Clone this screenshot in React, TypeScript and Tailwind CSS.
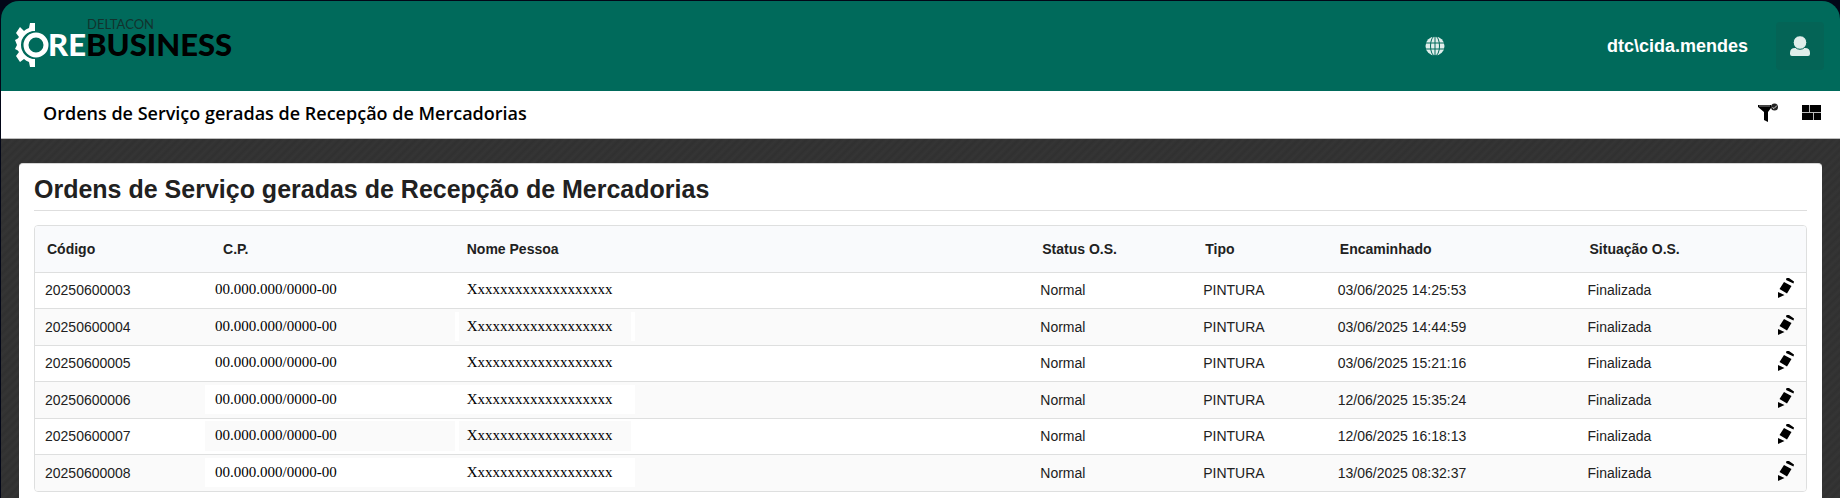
type Order = {
  code: string
  status: string
  kind: string
  sentAt: string
  situation: string
  // background of the masked part of the row
  mask: string
  personMask: string
}

const orders: Order[] = [
  { code: '20250600003', status: 'Normal', kind: 'PINTURA', sentAt: '03/06/2025 14:25:53', situation: 'Finalizada', mask: '', personMask: 'border-transparent' },
  { code: '20250600004', status: 'Normal', kind: 'PINTURA', sentAt: '03/06/2025 14:44:59', situation: 'Finalizada', mask: '', personMask: 'border-white' },
  { code: '20250600005', status: 'Normal', kind: 'PINTURA', sentAt: '03/06/2025 15:21:16', situation: 'Finalizada', mask: '', personMask: 'border-transparent' },
  { code: '20250600006', status: 'Normal', kind: 'PINTURA', sentAt: '12/06/2025 15:35:24', situation: 'Finalizada', mask: 'bg-white', personMask: 'border-white bg-white' },
  { code: '20250600007', status: 'Normal', kind: 'PINTURA', sentAt: '12/06/2025 16:18:13', situation: 'Finalizada', mask: 'bg-[#fafafa]', personMask: 'border-white bg-[#fafafa]' },
  { code: '20250600008', status: 'Normal', kind: 'PINTURA', sentAt: '13/06/2025 08:32:37', situation: 'Finalizada', mask: 'bg-white', personMask: 'border-white bg-white' },
]

const Logo = () => (
  <svg viewBox="0 -4 220 64" className="h-16 w-[220px]" role="img" aria-label="Deltacon Core Business">
    {/* half gear */}
    <path
      d="M21 5V13A14 14 0 0 0 21 41V49H16L15 44Q12 43 10 41L6 44L2 38L5 34Q4 32 1 31L3 27L1 22Q4 21 5 19L2 15L6 9L10 13Q12 11 15 10L16 5Z"
      fill="#fff"
    />
    <circle cx="22" cy="27" r="14" fill="#006a5b" />
    <circle cx="22" cy="27" r="10" fill="none" stroke="#fff" strokeWidth="5" />
    <text x="34" y="38" fill="#fff" className="font-['Lato'] text-[31px] font-black">RE</text>
    <text x="72" y="38" fill="#000" className="font-['Lato'] text-[31px] font-black">BUSINESS</text>
    <text x="73" y="11" fill="#12332e" className="font-['Lato'] text-[13px]">DELTACON</text>
  </svg>
)

const GlobeIcon = () => (
  <svg viewBox="0 0 20 20" className="size-5" aria-hidden="true">
    <circle cx="10" cy="10" r="9.5" fill="#e0eeeb" />
    <g fill="none" stroke="#006a5b" strokeWidth="1">
      <ellipse cx="10" cy="10" rx="4.5" ry="10" />
      <path d="M10 0V20M0 7H20M0 13H20" />
    </g>
  </svg>
)

const UserIcon = () => (
  <svg viewBox="0 0 20 20" className="size-5" aria-hidden="true">
    <path d="M0 20V17Q0 12 5 12H15Q20 12 20 17V18Q20 20 18 20H2Q0 20 0 18Z" fill="#e0eeeb" />
    <circle cx="10" cy="6.5" r="6.8" fill="#e0eeeb" stroke="#046456" strokeWidth="1" />
  </svg>
)

const FilterIcon = () => (
  <svg viewBox="0 0 20 20" className="size-5" aria-hidden="true">
    <path d="M0 2H13V5L10 9V19L6 17V9L0 4Z" fill="#000" />
    <path d="M1 3H12" stroke="#888" strokeWidth="1" />
    <circle cx="16.5" cy="4" r="3.5" fill="#222" />
    <path d="M14.5 4.5L16 5.5L19 2.5" stroke="#ddd" strokeWidth="1" fill="none" />
  </svg>
)

const PanelsIcon = () => (
  <svg viewBox="0 0 20 16" className="h-4 w-5" aria-hidden="true">
    <path d="M0 0H19V15H0Z" fill="#000" />
    <path d="M7.5 0V7.5M0 7.5H19M11.5 7.5V15" stroke="#bbb" strokeWidth="1" />
  </svg>
)

const PencilIcon = () => (
  <svg viewBox="0 0 16 20" className="h-5 w-4" aria-hidden="true">
    <path d="M8.5 0H11L16 3.5L15.5 5.5L8 2ZM6 4L13.5 8L9 15.5L1.5 11ZM0 14L6.5 17L0 20Z" fill="#000" />
  </svg>
)

const App = () => {
  return (
    <div className="bg-[#020617] pt-px pl-px font-['Liberation_Sans',sans-serif] text-[#212121]">
      <header className="flex h-[90px] items-center rounded-t-[18px] bg-[#006a5b] pr-4 pl-[13px]">
        <a href="#" className="mr-auto">
          <Logo />
        </a>
        <button aria-label="Idioma" className="mr-[162px]">
          <GlobeIcon />
        </button>
        <span className="mr-7 text-lg font-bold text-white">dtc\cida.mendes</span>
        <button aria-label="Usuário" className="flex size-12 items-center justify-center rounded bg-[#046456]">
          <UserIcon />
        </button>
      </header>

      <div className="flex h-12 items-center justify-between border-b border-[#bdbdbd] bg-white pr-[18px] pb-1 pl-[42px] text-black">
        <p className="font-['Open_Sans',sans-serif] text-lg font-semibold">Ordens de Serviço geradas de Recepção de Mercadorias</p>
        <div className="flex items-center gap-6">
          <button aria-label="Filtrar">
            <FilterIcon />
          </button>
          <button aria-label="Painéis">
            <PanelsIcon />
          </button>
        </div>
      </div>

      <main className="bg-[#333] bg-[repeating-linear-gradient(135deg,#303030_0px,#353535_3px,#303030_6px)] px-[18px] pt-6">
        <section className="rounded-t border-t border-[#d5d5d5] bg-white px-[15px] pb-[7px]">
          <h1 className="border-b border-[#dedede] pt-2 pb-1 text-[25px]/[34px] font-bold">Ordens de Serviço geradas de Recepção de Mercadorias</h1>
          <div className="mt-[14px] overflow-hidden rounded border border-[#dedfdf]">
            <table className="w-full table-fixed text-left text-sm">
              <colgroup>
                <col className="w-[9.6%]" />
                <col className="w-[14.1%]" />
                <col className="w-[32.5%]" />
                <col className="w-[9.2%]" />
                <col className="w-[7.6%]" />
                <col className="w-[14.1%]" />
                <col />
                <col className="w-7" />
              </colgroup>
              <thead>
                <tr className="h-[46px] border-b border-[#dedfdf] bg-[#f9fafc]">
                  <th className="pl-3">Código</th>
                  <th className="pl-[18px]">C.P.</th>
                  <th className="pl-3">Nome Pessoa</th>
                  <th className="pl-3">Status O.S.</th>
                  <th className="pl-3">Tipo</th>
                  <th className="pl-3">Encaminhado</th>
                  <th className="pl-3">Situação O.S.</th>
                  <th aria-label="Ações" />
                </tr>
              </thead>
              <tbody>
                {orders.map((order) => (
                  <tr
                    key={order.code}
                    className="h-9 border-b border-[#dedfdf] last:border-b-0 even:h-[37px] even:bg-[#fafafa]"
                  >
                    <td className="pl-[10px]">{order.code}</td>
                    <td className="font-['Liberation_Serif',serif] text-[15px] text-black">
                      <span className={`block py-1 pl-[10px] ${order.mask}`}>00.000.000/0000-00</span>
                    </td>
                    <td className="font-['Liberation_Serif',serif] text-[15px] text-black">
                      <span className={`block w-[180px] border-x-4 py-1 pl-2 ${order.personMask}`}>Xxxxxxxxxxxxxxxxxxx</span>
                    </td>
                    <td className="pl-[10px]">{order.status}</td>
                    <td className="pl-[10px]">{order.kind}</td>
                    <td className="pl-[10px]">{order.sentAt}</td>
                    <td className="pl-[10px]">{order.situation}</td>
                    <td className="pb-1">
                      <button aria-label={`Editar ${order.code}`} className="block">
                        <PencilIcon />
                      </button>
                    </td>
                  </tr>
                ))}
              </tbody>
            </table>
          </div>
        </section>
      </main>
    </div>
  )
}

export default App
